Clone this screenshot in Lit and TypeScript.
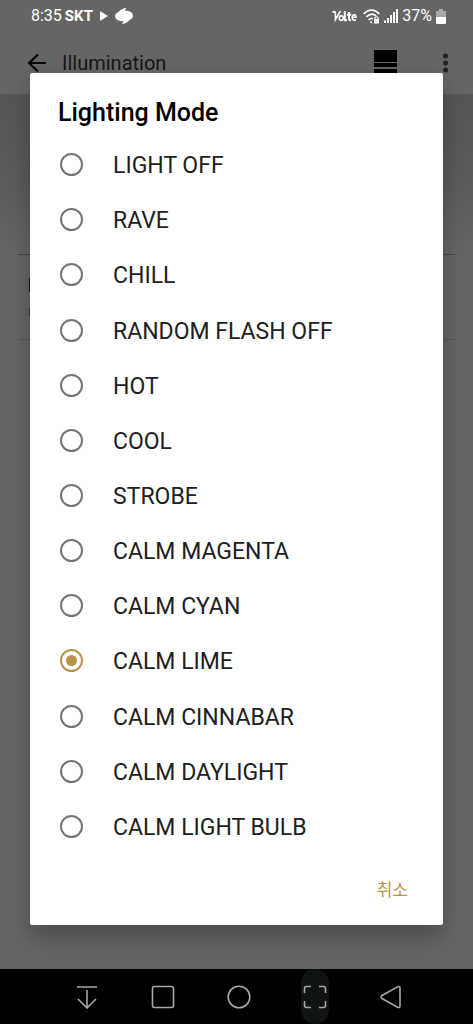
import { LitElement, html, css } from "lit";
import { customElement, state } from "lit/decorators.js";

const MODES = [
  "LIGHT OFF",
  "RAVE",
  "CHILL",
  "RANDOM FLASH OFF",
  "HOT",
  "COOL",
  "STROBE",
  "CALM MAGENTA",
  "CALM CYAN",
  "CALM LIME",
  "CALM CINNABAR",
  "CALM DAYLIGHT",
  "CALM LIGHT BULB",
];

@customElement("status-bar")
export class StatusBar extends LitElement {
  static styles = css`
    :host {
      display: flex;
      align-items: center;
      justify-content: space-between;
      height: 32px;
      padding: 0 27px 0 31px;
      color: #fff;
      font-size: 16px;
      line-height: 32px;
    }
    .side {
      display: flex;
      align-items: center;
      gap: 4px;
    }
    .left {
      gap: 3px;
    }
    .play {
      margin: 0 4px;
    }
    .wifi {
      margin-left: 2px;
    }
    svg {
      display: block;
    }
    b {
      font-size: 15px;
      font-weight: 700;
    }
  `;

  render() {
    return html`
      <div class="side left">
        <span>8:35</span><b>SKT</b>
        <svg class="play" width="8" height="10" viewBox="0 0 8 10"><path d="M0 0 8 5 0 10Z" fill="#fff" /></svg>
        <svg width="18" height="16" viewBox="0 0 18 16" fill="#fff">
          <ellipse cx="7" cy="8.300" rx="7" ry="5" />
          <ellipse cx="11" cy="7.700" rx="7" ry="5" />
          <path d="M3 5Q5 .8 11.500 0Q9.900 1.400 9.700 4ZM15 11Q13 15.200 7 16Q8.500 14.500 8.500 12Z" />
        </svg>
      </div>
      <div class="side">
        <svg width="25" height="12" viewBox="0 0 25 12" fill="none" stroke="#fff" stroke-width="1.600" aria-label="VoLTE">
          <path d="M.5 2.500C2 1 3.200 1.500 3.400 3V9.500L8.500 1" />
          <ellipse cx="9.300" cy="8" rx="2" ry="2.300" />
          <path d="M12.800 1V10.300H15M17 2V9Q17 10.300 19 10.200M15 4.700H19.200" stroke-width="2" />
          <path d="M20.300 7.300H24Q24 4.700 22.100 4.700T20.200 7.500T22.500 10.200L24 9.800" />
        </svg>
        <svg class="wifi" width="17" height="15" viewBox="0 0 17 15" fill="none" stroke="#fff" stroke-width="1.600">
          <path d="M.6 4.800Q8.500-2.800 16.400 4.800M3.200 8Q8.500 2.900 13.200 7M5.700 10.800Q8 8.600 10 9.800" />
          <circle cx="8.200" cy="13.300" r="1" fill="#fff" stroke="none" />
          <path d="M11 10H16V14.500H11Z" fill="#fff" stroke="none" />
          <path d="M12 10V8.700Q13.500 6.800 15 8.700V10" stroke-width="1.200" />
        </svg>
        <svg width="14" height="14" viewBox="0 0 14 14" stroke="#fff" stroke-width="2">
          <path d="M1 11.500V14M4 9V14M7 6V14M10 3V14M13 0V14" />
        </svg>
        <span>37%</span>
        <svg width="10" height="15" viewBox="0 0 10 15">
          <path d="M3 0H7V2H10V8H0V2H3Z" fill="#aaa6ab" />
          <path d="M0 8H10V14Q10 15 9 15H1Q0 15 0 14Z" fill="#fff" />
        </svg>
      </div>
    `;
  }
}

@customElement("mode-dialog")
export class ModeDialog extends LitElement {
  @state() selected = "CALM LIME";

  static styles = css`
    :host {
      display: flex;
      flex-direction: column;
      box-sizing: border-box;
      padding: 24px 28px 16px;
      background: #fff;
      border-radius: 2px;
      box-shadow: 0 15px 24px rgba(0, 0, 0, 0.2), 0 4px 16px rgba(0, 0, 0, 0.06);
      color: #202020;
    }
    h1 {
      margin: 0;
      color: #000;
      font-size: 25px;
      line-height: 32px;
      font-weight: 500;
    }
    fieldset {
      flex: 1;
      display: flex;
      flex-direction: column;
      margin: 8px 0 15px;
      padding: 0;
      border: 0;
      min-width: 0;
    }
    label {
      flex: 1;
      display: flex;
      align-items: center;
      gap: 30px;
      padding-left: 2px;
      font-size: 23px;
      line-height: 32px;
    }
    label span {
      padding-top: 3px;
    }
    input {
      appearance: none;
      display: grid;
      place-items: center;
      box-sizing: border-box;
      width: 23px;
      height: 23px;
      margin: 0;
      border: 2px solid #757575;
      border-radius: 50%;
    }
    input:checked {
      border-color: #b8944a;
    }
    input:checked::before {
      content: "";
      width: 11px;
      height: 11px;
      border-radius: 50%;
      background: #b8944a;
    }
    .cancel {
      align-self: flex-end;
      padding: 0 7px 2px;
      height: 40px;
      border: 0;
      background: none;
      color: #b8944a;
      font: 17px "Noto Sans CJK KR", sans-serif;
    }
  `;

  render() {
    return html`
      <h1 id="title">Lighting Mode</h1>
      <fieldset aria-labelledby="title">
        ${MODES.map(
          (mode) => html`<label
            ><input
              type="radio"
              name="mode"
              .value=${mode}
              .checked=${this.selected === mode}
              @change=${() => (this.selected = mode)}
            /><span>${mode}</span></label
          >`
        )}
      </fieldset>
      <button class="cancel">취소</button>
    `;
  }
}

@customElement("nav-bar")
export class NavBar extends LitElement {
  static styles = css`
    :host {
      display: flex;
      justify-content: center;
      gap: 48px;
      height: 55px;
      padding-left: 4px;
      background: #000;
    }
    button {
      display: grid;
      place-items: center;
      width: 28px;
      height: 55px;
      padding: 0;
      border: 0;
      border-radius: 14px;
      background: none;
    }
    .active {
      background: #101511;
    }
    svg {
      fill: none;
      stroke: #aaa7aa;
      stroke-width: 1.6;
    }
  `;

  render() {
    return html`
      <button aria-label="Notifications">
        <svg width="24" height="24" viewBox="0 0 24 24"><path d="M2 2H22M12 5V23M3 14L12 23L21 14" /></svg>
      </button>
      <button aria-label="Recents">
        <svg width="24" height="24" viewBox="0 0 24 24"><rect x="1.500" y="1.500" width="21" height="21" rx="2" /></svg>
      </button>
      <button aria-label="Home">
        <svg width="24" height="24" viewBox="0 0 24 24"><circle cx="12" cy="12" r="10.800" /></svg>
      </button>
      <button class="active" aria-label="Capture">
        <svg width="24" height="24" viewBox="0 0 24 24">
          <path d="M1.500 8V3.500Q1.500 1.500 3.500 1.500H8M16 1.500H20.500Q22.500 1.500 22.500 3.500V8M22.500 16V20.500Q22.500 22.500 20.500 22.500H16M8 22.500H3.500Q1.500 22.500 1.500 20.500V16" />
        </svg>
      </button>
      <button aria-label="Back">
        <svg width="24" height="24" viewBox="0 0 24 24">
          <path d="M19 1.600L3 10.500Q1 12 3 13.500L19 22.400Q21 23 21 21V3Q21 1 19 1.600Z" />
        </svg>
      </button>
    `;
  }
}

@customElement("app-root")
export class AppRoot extends LitElement {
  static styles = css`
    :host {
      display: flex;
      flex-direction: column;
      min-height: 100vh;
      font-family: Roboto, sans-serif;
      background: #656663;
    }
    .screen {
      position: relative;
      flex: 1;
      display: flex;
      flex-direction: column;
    }
    header {
      display: flex;
      align-items: center;
      height: 62px;
      padding: 0 25px 0 27px;
      color: #161616;
    }
    header button {
      display: block;
      padding: 0;
      border: 0;
      background: none;
    }
    header svg {
      display: block;
    }
    h2 {
      flex: 1;
      margin: 0 0 0 15px;
      font-size: 20px;
      line-height: 24px;
      font-weight: 400;
    }
    .menu {
      margin-left: 46px;
    }
    .hero {
      height: 160px;
      background: linear-gradient(#555655, #5c5d5a 60%, #656663);
    }
    .item {
      display: flex;
      flex-direction: column;
      gap: 16px;
      height: 86px;
      box-sizing: border-box;
      margin: 0 18px;
      padding: 23px 11px;
      border-top: 1px solid #454545;
      border-bottom: 1px solid #575857;
    }
    .stem,
    .bowl {
      width: 2px;
      height: 14px;
      background: #161616;
    }
    .bowl {
      height: 8px;
      background: #333;
    }
    .overlay {
      position: absolute;
      inset: 0;
      display: flex;
      flex-direction: column;
      padding: 73px 30px 44px;
    }
    mode-dialog {
      flex: 1;
    }
  `;

  render() {
    return html`
      <div class="screen">
        <status-bar></status-bar>
        <header>
          <button aria-label="Back">
            <svg width="20" height="20" viewBox="0 0 20 20" fill="none" stroke="#080808" stroke-width="2.200">
              <path d="M19 10H2M11 1.500L2 10L11 18.500" />
            </svg>
          </button>
          <h2>Illumination</h2>
          <button aria-label="Device">
            <svg width="23" height="26" viewBox="0 0 23 26"><path d="M0 0H23V12H0ZM0 13H23V17H0ZM0 19H23V26H0Z" /></svg>
          </button>
          <button class="menu" aria-label="More options">
            <svg width="5" height="20" viewBox="0 0 5 20" fill="#222">
              <circle cx="2.500" cy="3" r="2.500" /><circle cx="2.500" cy="10" r="2.500" /><circle cx="2.500" cy="17" r="2.500" />
            </svg>
          </button>
        </header>
        <div class="hero"></div>
        <div class="item"><div class="stem"></div><div class="bowl"></div></div>
        <div class="overlay"><mode-dialog role="dialog"></mode-dialog></div>
      </div>
      <nav-bar></nav-bar>
    `;
  }
}
